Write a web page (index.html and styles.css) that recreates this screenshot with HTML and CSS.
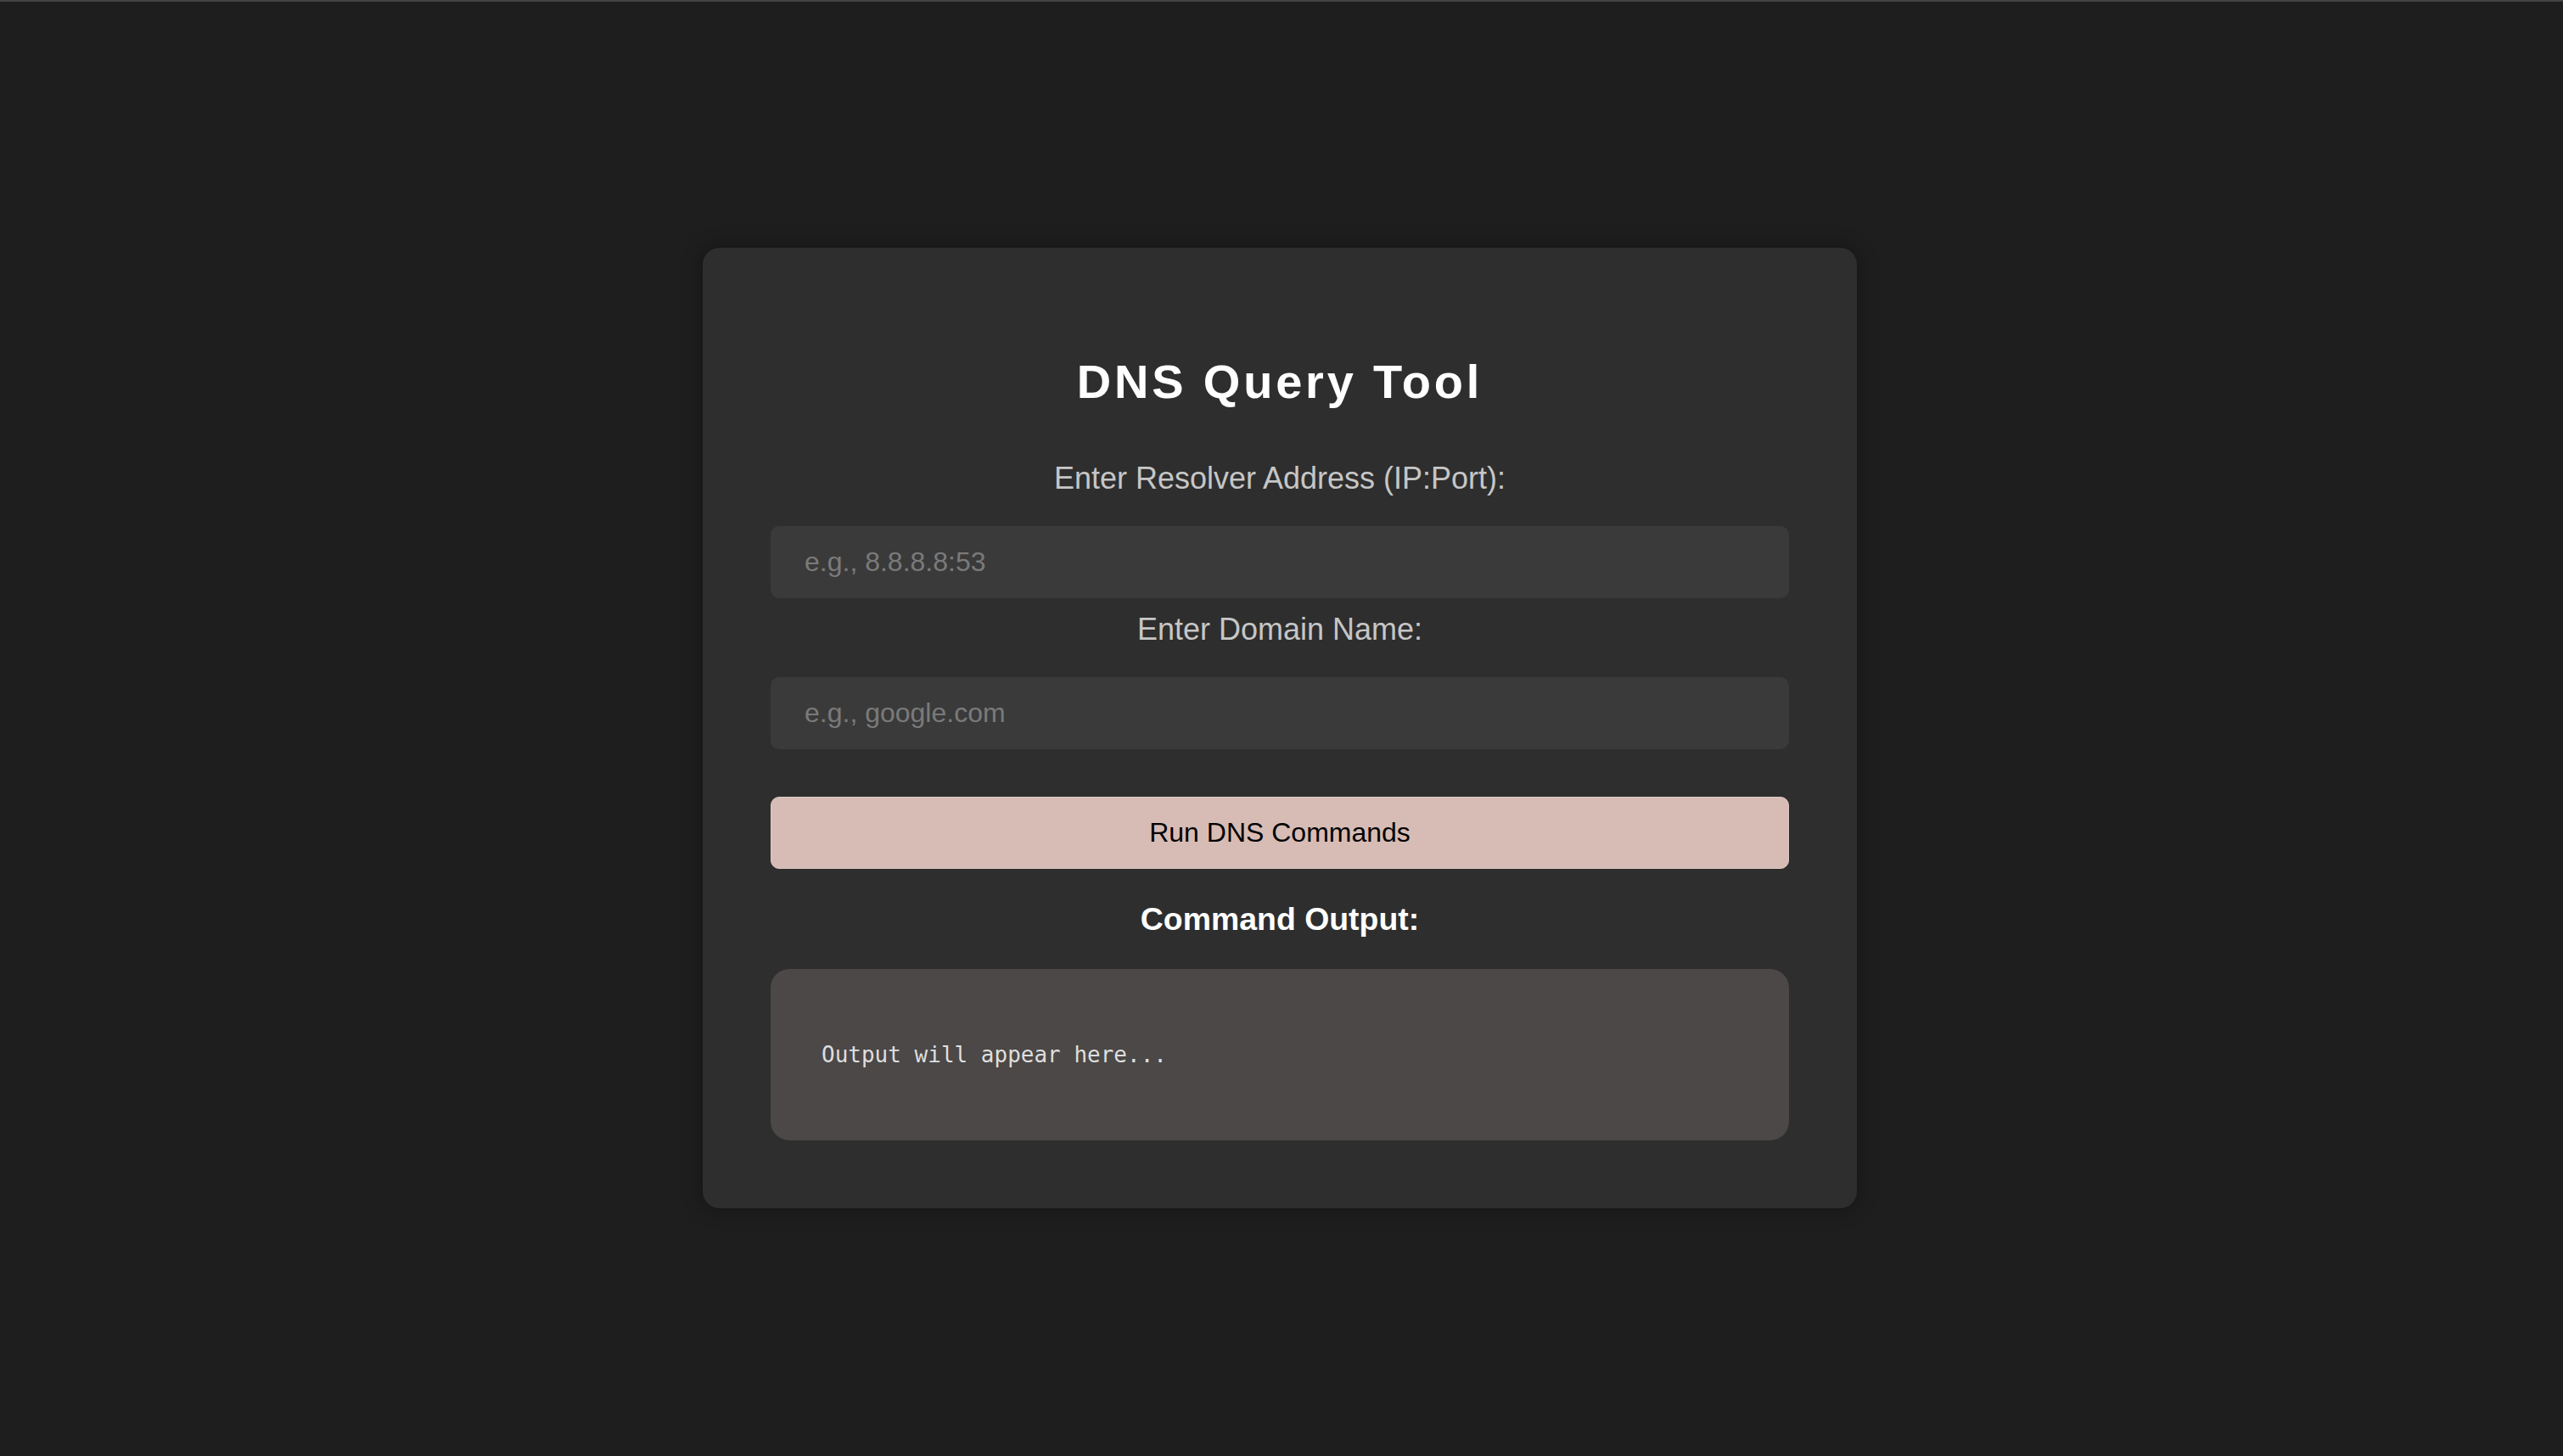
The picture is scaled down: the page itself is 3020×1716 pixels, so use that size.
FILE: index.html
```html
<!DOCTYPE html>
<html lang="en">
<head>
<meta charset="utf-8">
<title>DNS Query Tool</title>
<link rel="stylesheet" href="styles.css">
</head>
<body>
<main class="card">
  <h1 class="title">DNS Query Tool</h1>
  <label class="label label-first" for="resolver">Enter Resolver Address (IP:Port):</label>
  <input class="field" id="resolver" type="text" placeholder="e.g., 8.8.8.8:53">
  <label class="label" for="domain">Enter Domain Name:</label>
  <input class="field" id="domain" type="text" placeholder="e.g., google.com">
  <button class="run" type="button">Run DNS Commands</button>
  <h3 class="out-title">Command Output:</h3>
  <pre class="output">Output will appear here...</pre>
</main>
</body>
</html>
```

FILE: styles.css
```css
html {
  background: #1e1e1e;
}
body {
  margin: 0;
  border-top: 2px solid #444444;
  min-height: calc(100vh - 2px);
  display: flex;
  align-items: center;
  justify-content: center;
  font-family: "Liberation Sans", Arial, Helvetica, sans-serif;
  background: #1e1e1e;
}
.card {
  width: 1200px;
  padding: 80px;
  background: #2e2e2e;
  border-radius: 20px;
  box-shadow: 0 0 24px rgba(0, 0, 0, 0.35);
  display: flex;
  flex-direction: column;
  margin: -2px 4px 0 0;
}
.title {
  margin: 46px 0 0;
  font-size: 56px;
  line-height: 64px;
  font-weight: 700;
  letter-spacing: 3.8px;
  color: #ffffff;
  text-align: center;
}
.label {
  display: block;
  font-size: 36px;
  line-height: 42px;
  color: #c6c6c6;
  text-align: center;
  margin: 16px 0 0;
}
.label-first {
  margin-top: 61px;
}
.field {
  box-sizing: border-box;
  width: 100%;
  height: 85px;
  margin: 35px 0 0;
  padding: 0 40px;
  border: none;
  border-radius: 10px;
  background: #3a3a3a;
  color: #e0e0e0;
  font-family: "Liberation Sans", Arial, Helvetica, sans-serif;
  font-size: 32px;
  outline: none;
}
.field::placeholder {
  color: #7a7a7a;
}
.run {
  box-sizing: border-box;
  width: 100%;
  height: 85px;
  margin: 56px 0 0;
  border: 1px solid #dfc9c3;
  border-radius: 10px;
  background: #d7bcb5;
  color: #000000;
  font-family: "Liberation Sans", Arial, Helvetica, sans-serif;
  font-size: 32px;
  padding: 0;
}
.out-title {
  margin: 37px 0 0;
  font-size: 37.44px;
  line-height: 44px;
  font-weight: 700;
  color: #ffffff;
  text-align: center;
}
.output {
  box-sizing: border-box;
  margin: 37px 0 0;
  height: 202px;
  padding: 86px 60px;
  background: #4b4847;
  border-radius: 22px;
  color: #dedede;
  font-family: "DejaVu Sans Mono", "Liberation Mono", monospace;
  font-size: 26px;
  line-height: 30px;
}
```
